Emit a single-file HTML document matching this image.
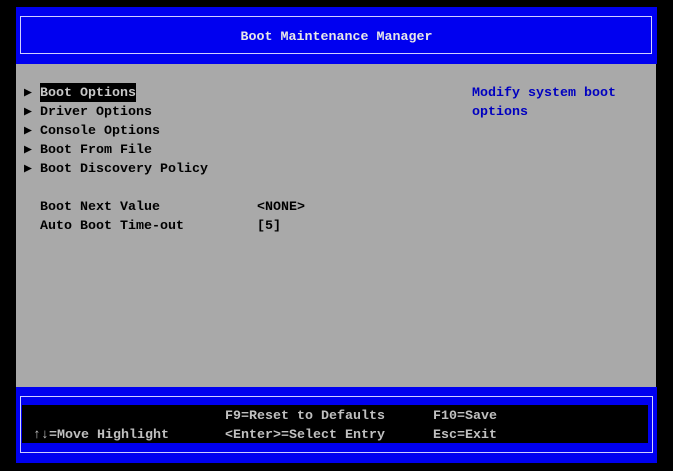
<!DOCTYPE html>
<html><head><style>
body{margin:0;width:673px;height:471px;background:#000;position:relative;overflow:hidden;font-family:"Liberation Mono",monospace;font-weight:bold;font-size:13.33px}
.a{position:absolute}
.t{position:absolute;white-space:pre;line-height:19px;height:19px}
</style></head><body>
<div class="a" style="left:16px;top:7px;width:641px;height:57px;background:#0000f0"></div>
<div class="a" style="left:20px;top:16px;width:630px;height:36px;border:1.5px solid #d0d0ff"></div>
<div class="t" style="left:16px;top:28px;width:641px;text-align:center;color:#e8e8e8">Boot Maintenance Manager</div>
<div class="a" style="left:16px;top:64px;width:640px;height:323px;background:#a9a9a9"></div>
<div class="a" style="left:16px;top:387px;width:641px;height:76px;background:#0000f0"></div>
<div class="a" style="left:20px;top:396px;width:631px;height:55px;border:1.5px solid #d0d0ff"></div>
<div class="a" style="left:22px;top:405px;width:626px;height:38px;background:#000"></div>
<div class="a" style="left:40px;top:83px;width:96px;height:19px;background:#000"></div>
<div class="t" style="left:24px;top:84px;color:#000">▶ <span style="color:#c8c8c8">Boot Options</span>
▶ Driver Options
▶ Console Options
▶ Boot From File
▶ Boot Discovery Policy

  Boot Next Value</div>
<div class="t" style="left:40px;top:217px;color:#000">Auto Boot Time-out</div>
<div class="t" style="left:257px;top:198px;color:#000">&lt;NONE&gt;
[5]</div>
<div class="t" style="left:472px;top:84px;color:#0000c0">Modify system boot
options</div>
<div class="t" style="left:225px;top:407px;color:#c0c0c0">F9=Reset to Defaults
&lt;Enter&gt;=Select Entry</div>
<div class="t" style="left:433px;top:407px;color:#c0c0c0">F10=Save
Esc=Exit</div>
<div class="t" style="left:33px;top:426px;color:#c0c0c0">↑↓=Move Highlight</div>
</body></html>
